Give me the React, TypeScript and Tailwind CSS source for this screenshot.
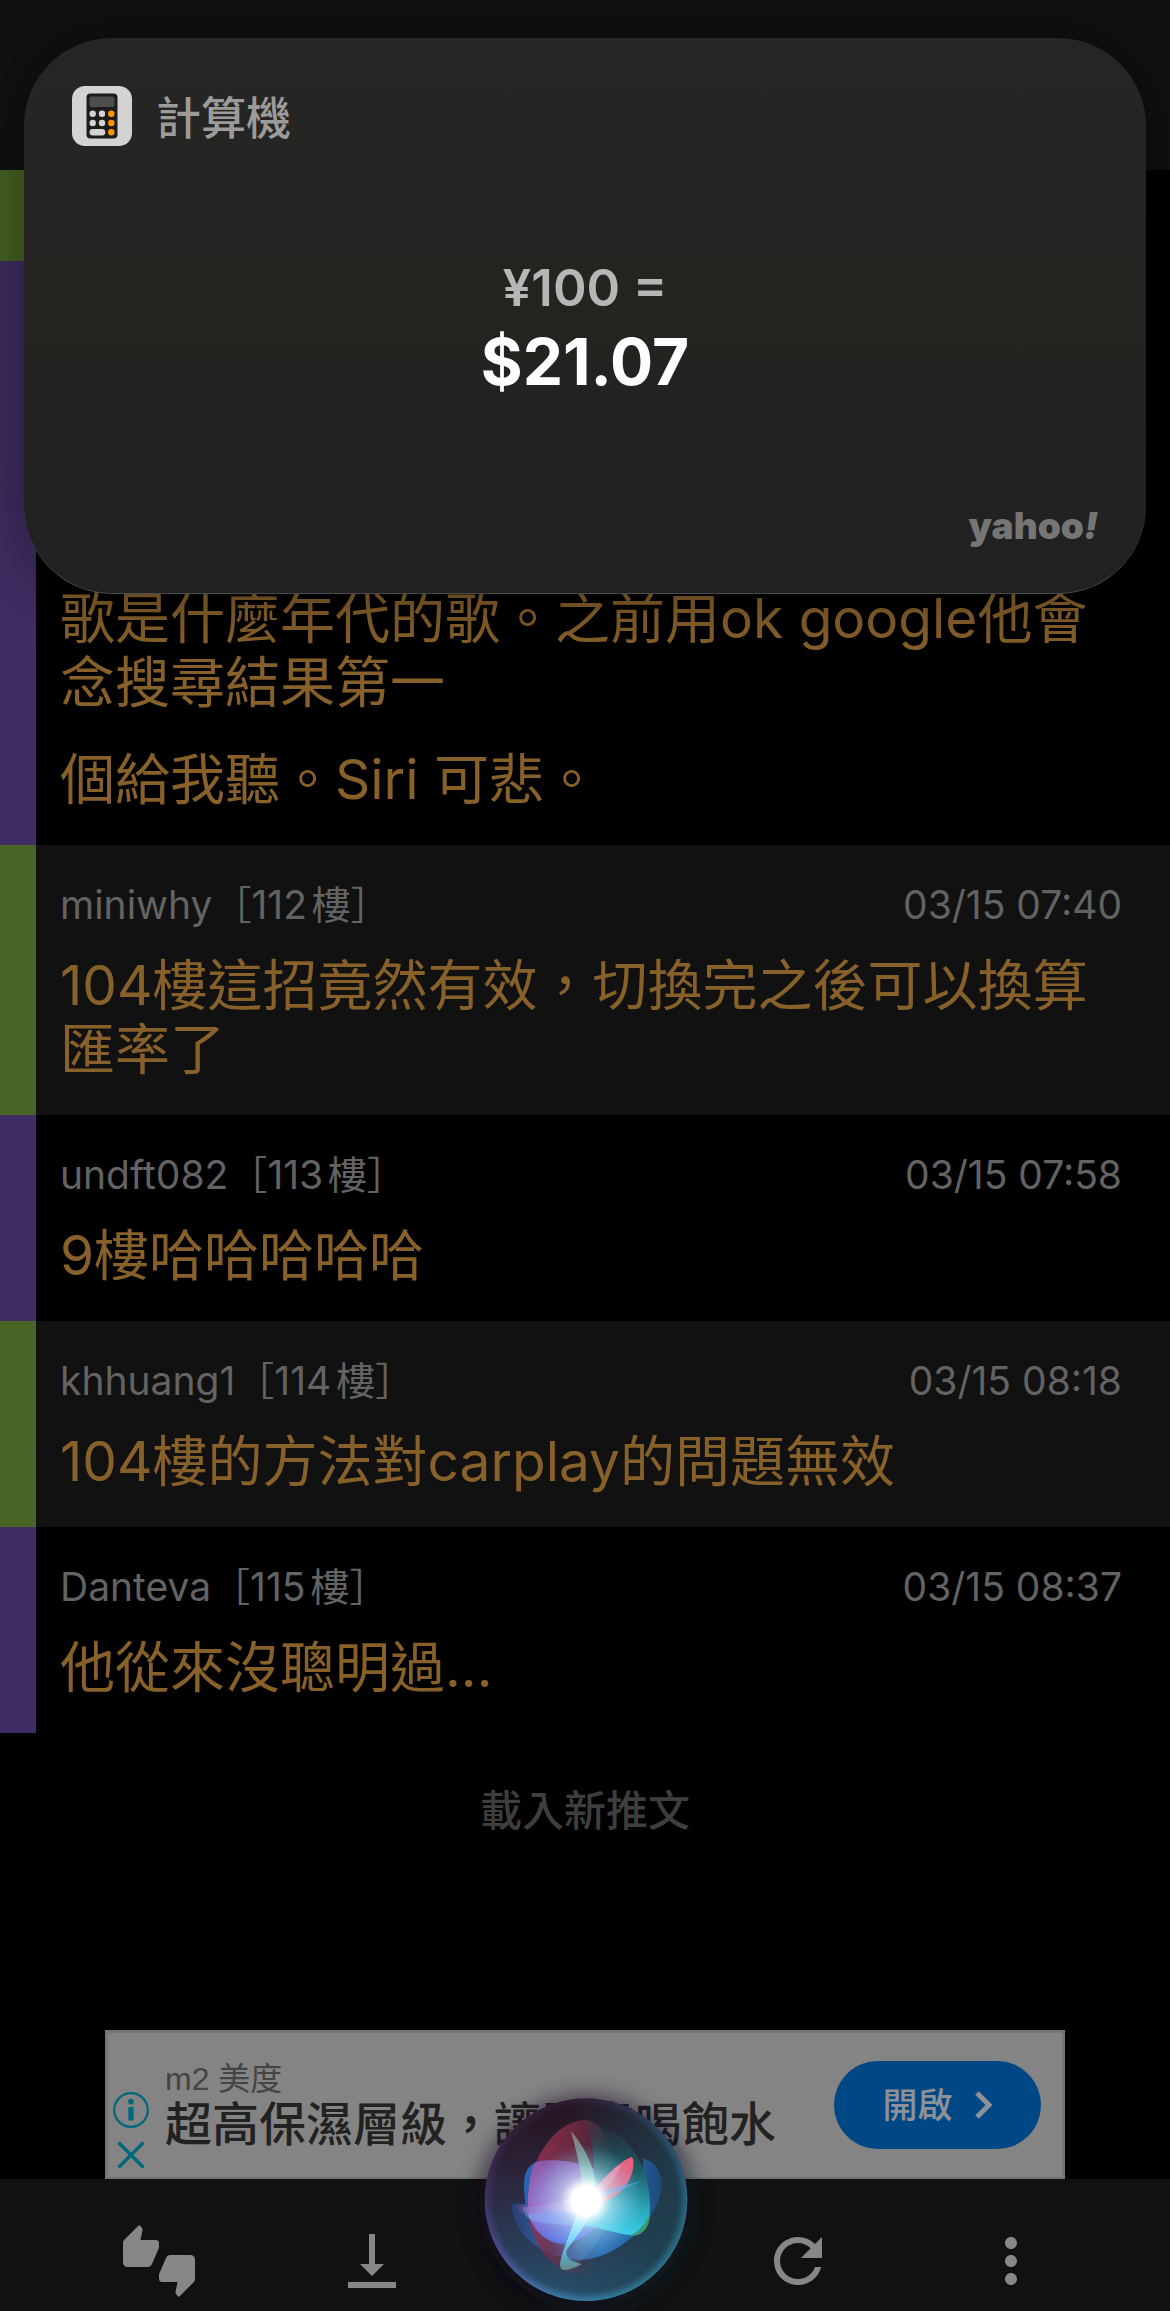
import React from 'react';
import { MdMoreVert, MdRefresh, MdThumbsUpDown, MdVerticalAlignBottom } from 'react-icons/md';

const comments = [
  { user: 'miniwhy', floor: 112, time: '03/15 07:40', text: '104樓這招竟然有效，切換完之後可以換算匯率了' },
  { user: 'undft082', floor: 113, time: '03/15 07:58', text: '9樓哈哈哈哈哈' },
  { user: 'khhuang1', floor: 114, time: '03/15 08:18', text: '104樓的方法對carplay的問題無效' },
  { user: 'Danteva', floor: 115, time: '03/15 08:37', text: '他從來沒聰明過...' },
];

const CalculatorIcon = () => (
  <svg viewBox="0 0 60 60" className="size-[60px]" aria-hidden="true">
    <rect width="60" height="60" rx="13" fill="#d5d3d1" />
    <rect x="14.5" y="7.5" width="31" height="45" rx="4" fill="#1c1c1c" />
    <rect x="17.5" y="10.5" width="25" height="10.5" rx="2" fill="#4d4d4d" />
    <g fill="#d5d3d1">
      <circle cx="20.7" cy="27.7" r="3.2" />
      <circle cx="30" cy="27.7" r="3.2" />
      <circle cx="20.7" cy="37" r="3.2" />
      <circle cx="30" cy="37" r="3.2" />
      <rect x="17.5" y="43" width="15.8" height="6.4" rx="3.2" />
    </g>
    <g fill="#ff9500">
      <circle cx="39.3" cy="27.7" r="3.2" />
      <circle cx="39.3" cy="37" r="3.2" />
      <circle cx="39.3" cy="46.2" r="3.2" />
    </g>
  </svg>
);

const SiriOrb = () => (
  <svg viewBox="0 0 810 723" className="w-[270px] h-[241px] overflow-visible" aria-hidden="true">
    <defs>
      <filter id="soft" x="-50%" y="-50%" width="200%" height="200%">
        <feGaussianBlur stdDeviation="34" />
      </filter>
      <filter id="rimBlur" x="-20%" y="-20%" width="140%" height="140%">
        <feGaussianBlur stdDeviation="10" />
      </filter>
      <clipPath id="orbClip">
        <circle cx="408" cy="389" r="304" />
      </clipPath>
      <linearGradient id="halo" x1="0" y1="0" x2="1" y2="1">
        <stop offset="0" stopColor="#1d1220" />
        <stop offset="0.55" stopColor="#0d0d20" />
        <stop offset="1" stopColor="#06262e" />
      </linearGradient>
      <linearGradient id="body" x1="0" y1="0" x2="0" y2="1">
        <stop offset="0" stopColor="#26121d" />
        <stop offset="0.35" stopColor="#2b2338" />
        <stop offset="0.7" stopColor="#2a3a55" />
        <stop offset="1" stopColor="#28506b" />
      </linearGradient>
      <linearGradient id="bodyRight" x1="0" y1="0" x2="1" y2="0">
        <stop offset="0.4" stopColor="#1b434f" stopOpacity="0" />
        <stop offset="1" stopColor="#1b434f" stopOpacity="0.8" />
      </linearGradient>
      <linearGradient id="rim" x1="0" y1="0.1" x2="1" y2="0.9">
        <stop offset="0" stopColor="#4a1f4e" />
        <stop offset="0.35" stopColor="#5b4fa8" />
        <stop offset="0.6" stopColor="#4480b8" />
        <stop offset="1" stopColor="#2a8a9a" />
      </linearGradient>
      <linearGradient id="rimFade" x1="0" y1="0" x2="0" y2="1">
        <stop offset="0" stopColor="#fff" stopOpacity="0.1" />
        <stop offset="0.5" stopColor="#fff" stopOpacity="0.6" />
        <stop offset="1" stopColor="#fff" stopOpacity="0.9" />
      </linearGradient>
      <mask id="rimMask">
        <rect width="810" height="723" fill="url(#rimFade)" />
      </mask>
      <linearGradient id="red" x1="0" y1="0" x2="1" y2="0.4">
        <stop offset="0" stopColor="#b8385e" />
        <stop offset="0.5" stopColor="#7c2c46" />
        <stop offset="1" stopColor="#7c2c46" stopOpacity="0" />
      </linearGradient>
      <linearGradient id="teal" x1="0.6" y1="0" x2="0.5" y2="1">
        <stop offset="0" stopColor="#1e4a50" stopOpacity="0" />
        <stop offset="0.45" stopColor="#1d6a6c" />
        <stop offset="0.75" stopColor="#2cb4c2" />
        <stop offset="1" stopColor="#38e0f4" />
      </linearGradient>
      <linearGradient id="blue" x1="0" y1="0" x2="1" y2="0">
        <stop offset="0" stopColor="#28407c" />
        <stop offset="0.45" stopColor="#3a86d0" />
        <stop offset="0.8" stopColor="#2670b8" />
        <stop offset="1" stopColor="#1e4a80" />
      </linearGradient>
      <linearGradient id="violet" x1="0" y1="0" x2="0.3" y2="1">
        <stop offset="0" stopColor="#8e58b0" />
        <stop offset="0.5" stopColor="#9a78d8" />
        <stop offset="1" stopColor="#5a78f0" />
      </linearGradient>
      <linearGradient id="leftRay" x1="0" y1="0" x2="1" y2="0">
        <stop offset="0" stopColor="#8a4a7c" stopOpacity="0.6" />
        <stop offset="0.4" stopColor="#b070c8" />
        <stop offset="1" stopColor="#ffc8f4" />
      </linearGradient>
      <linearGradient id="upPetal" x1="0" y1="0" x2="0" y2="1">
        <stop offset="0" stopColor="#8c7d84" />
        <stop offset="0.5" stopColor="#74a896" />
        <stop offset="1" stopColor="#a8fff0" />
      </linearGradient>
      <linearGradient id="downPetal" x1="0" y1="0" x2="0" y2="1">
        <stop offset="0" stopColor="#c8ffff" />
        <stop offset="0.5" stopColor="#72eaff" />
        <stop offset="0.8" stopColor="#62b4d4" />
        <stop offset="1" stopColor="#6a9484" />
      </linearGradient>
      <radialGradient id="core">
        <stop offset="0" stopColor="#fff" />
        <stop offset="0.26" stopColor="#fff" />
        <stop offset="0.45" stopColor="#d8f4ff" stopOpacity="0.55" />
        <stop offset="1" stopColor="#80c8ff" stopOpacity="0" />
      </radialGradient>
    </defs>

    <circle cx="408" cy="400" r="318" fill="url(#halo)" opacity="0.7" filter="url(#soft)" />
    <circle cx="408" cy="389" r="304" fill="url(#body)" />
    <circle cx="408" cy="389" r="304" fill="url(#bodyRight)" />
    <g clipPath="url(#orbClip)" mask="url(#rimMask)">
      <circle cx="408" cy="389" r="304" fill="none" stroke="url(#rim)" strokeWidth="26" filter="url(#rimBlur)" />
      <circle cx="408" cy="389" r="303" fill="none" stroke="url(#rim)" strokeWidth="3" />
    </g>

    {/* overlapping petals, widest first */}
    <path d="M184 400C190 490 270 570 400 569C520 560 640 430 635 335C632 295 605 272 578 265C590 330 520 400 408 410Z" fill="url(#blue)" opacity="0.85" />
    <path d="M405 150C300 156 233 290 233 400C233 520 310 612 390 612C450 612 492 500 492 390C492 250 470 150 405 150Z" fill="url(#red)" opacity="0.75" />
    <path d="M222 350C222 290 245 268 310 271C285 269 268 271 252 279C237 325 231 370 236 440C227 415 222 385 222 350Z" fill="#2a62b4" />
    <path d="M252 279C270 271 290 270 310 271C400 275 480 300 490 370C470 470 390 525 330 521C290 514 258 490 236 440C231 370 236 325 252 279Z" fill="url(#violet)" opacity="0.88" />
    <path d="M405 150C520 170 600 270 600 410C600 475 575 500 540 496C480 486 440 470 400 468L408 390C440 330 440 240 405 150Z" fill="url(#teal)" opacity="0.88" />
    <path d="M600 430C600 475 575 500 540 496C570 485 588 460 600 430Z" fill="#3c9a6c" />
    <path d="M218 412C222 432 232 448 255 455C300 464 350 464 402 468L410 395Z" fill="#8fb4ff" opacity="0.45" />
    <path d="M198 407L400 383V432C330 420 270 430 222 432C208 428 200 418 198 407Z" fill="url(#leftRay)" opacity="0.5" />
    <path d="M363 183C400 225 442 300 440 375L398 385C398 300 375 235 363 183Z" fill="url(#upPetal)" opacity="0.9" />
    <path d="M415 400C430 345 515 268 545 261C556 270 552 320 522 353C492 388 455 405 415 400Z" fill="#e8607f" />
    <path d="M415 400C440 385 500 330 512 284C470 310 425 360 415 400Z" fill="#ff9db8" opacity="0.5" />
    <path d="M420 372L577 332C550 345 480 375 425 395Z" fill="#4aa0f0" opacity="0.6" />
    <path d="M388 400L425 415C418 455 385 500 345 548C400 500 440 470 460 480C440 530 395 585 342 600C331 598 329 588 331 575C340 530 372 470 388 400Z" fill="#4a9fd8" opacity="0.3" />
    <path d="M388 400L425 415C412 465 378 500 350 540C344 560 360 575 395 582C375 594 358 600 342 600C331 598 329 588 331 575C340 530 372 470 388 400Z" fill="url(#downPetal)" opacity="0.85" />
    <circle cx="408" cy="392" r="170" fill="url(#core)" />
  </svg>
);

const Stripe = ({ green }: { green: boolean }) => (
  <div className={green ? 'w-9 shrink-0 bg-[#486426]' : 'w-9 shrink-0 bg-[#402d63]'} />
);

export default function App() {
  return (
    <div
      lang="zh-Hant"
      className="relative flex min-h-screen flex-col overflow-hidden bg-black font-['Inter','Noto_Sans_CJK_TC',sans-serif]"
    >
      <header className="h-[170px] bg-[#111111]" />

      <main className="flex flex-1 flex-col">
        <div className="flex h-[91px]">
          <Stripe green />
        </div>

        <article className="flex min-h-[584px]">
          <Stripe green={false} />
          <div className="flex flex-1 flex-col justify-end pl-6 pr-12 pb-[34px] text-[55px] leading-[64px] text-[#87602a]">
            <p>歌是什麼年代的歌。之前用ok google他會念搜尋結果第一</p>
            <p className="mt-[33px]">個給我聽。Siri 可悲。</p>
          </div>
        </article>

        {comments.map((c) => (
          <article key={c.floor} className={c.floor % 2 === 0 ? 'flex bg-[#111111]' : 'flex'}>
            <Stripe green={c.floor % 2 === 0} />
            <div className="flex-1 pl-6 pr-12 pt-9 pb-[34px]">
              <div className="flex justify-between text-[39px] leading-[48px] text-[#636363] [text-autospace:normal]">
                <span>{c.user}［{c.floor}樓］</span>
                <time>{c.time}</time>
              </div>
              <p className="mt-6 text-[55px] leading-[64px] text-[#87602a]">{c.text}</p>
            </div>
          </article>
        ))}

        <button className="h-[154px] text-[42px] font-medium text-[#3e3e3e]">載入新推文</button>

        {/* ad banner */}
        <aside className="mx-[105px] mt-auto -mb-px flex h-[150px] items-center border-3 border-[#757575] bg-[#848484] pr-[21px]">
          <div className="flex w-[45px] flex-col items-center gap-3 pt-[52px] text-[#00677c]">
            <button aria-label="廣告資訊">
              <svg viewBox="0 0 36 36" className="size-9" fill="none">
                <circle cx="18" cy="18" r="16.8" stroke="currentColor" strokeWidth="2.2" />
                <circle cx="18" cy="9.6" r="2.8" fill="currentColor" />
                <rect x="15.4" y="15" width="5.2" height="13.5" fill="currentColor" />
              </svg>
            </button>
            <button aria-label="關閉廣告">
              <svg viewBox="0 0 30 30" className="size-[30px]" fill="none" stroke="currentColor" strokeWidth="3.4">
                <path d="M2.5 2.5L27.5 27.5M27.5 2.5L2.5 27.5" />
              </svg>
            </button>
          </div>
          <div className="ml-3 flex-1 whitespace-nowrap font-['Liberation_Sans','Noto_Sans_CJK_TC',sans-serif]">
            <p className="text-[32px] leading-[40px] text-[#444444]">m2 美度</p>
            <p className="text-[47px] font-medium leading-[52px] text-[#222222]">超高保濕層級，讓肌膚喝飽水</p>
          </div>
          <button className="flex h-[88px] w-[207px] items-center justify-center gap-[22px] rounded-full bg-[#004786] text-[35px] font-medium text-[#8c9298]">
            開啟
            <svg viewBox="0 0 18 28" className="h-7 w-[18px]" fill="none" stroke="currentColor" strokeWidth="5">
              <path d="M2 2L14 14L2 26" />
            </svg>
          </button>
        </aside>
      </main>

      <nav className="relative flex bg-[#111111] px-[52px] pt-[46px] pb-[14px] text-[#878787]">
        <button aria-label="推噓" className="flex flex-1 justify-center">
          <MdThumbsUpDown className="size-[72px]" />
        </button>
        <button aria-label="到底部" className="flex flex-1 justify-center">
          <MdVerticalAlignBottom className="size-[72px]" />
        </button>
        <div className="flex-1" />
        <button aria-label="重新整理" className="flex flex-1 justify-center">
          <MdRefresh className="size-[72px]" />
        </button>
        <button aria-label="更多" className="flex flex-1 justify-center">
          <MdMoreVert className="size-[72px]" />
        </button>
        <button aria-label="Siri" className="absolute bottom-0 left-1/2 -translate-x-1/2">
          <SiriOrb />
        </button>
      </nav>

      {/* Siri result card, floats above the thread */}
      <section className="absolute inset-x-6 top-[38px] flex min-h-[556px] flex-col rounded-[88px] border-b border-[#4a4a4a] bg-linear-to-b from-[#262626] via-[#242320] to-[#222122] px-12 pt-12 pb-[43px] shadow-[0_0_70px_rgba(0,0,0,0.45)]">
        <div className="flex items-center gap-6">
          <CalculatorIcon />
          <h1 className="font-['Noto_Sans_CJK_TC',sans-serif] text-[45px] font-medium leading-[60px] text-[#9d9b99]">
            計算機
          </h1>
        </div>
        <div className="mt-28 text-center">
          <p className="text-[51px] font-semibold leading-[60px] text-[#b7b6b4]">¥100 =</p>
          <p className="text-[64px] font-bold leading-[88px] text-white">$21.07</p>
        </div>
        <p className="mt-auto text-right text-[37px] font-black leading-[48px] text-[#767575]">
          yahoo<span className="italic">!</span>
        </p>
      </section>
    </div>
  );
}
